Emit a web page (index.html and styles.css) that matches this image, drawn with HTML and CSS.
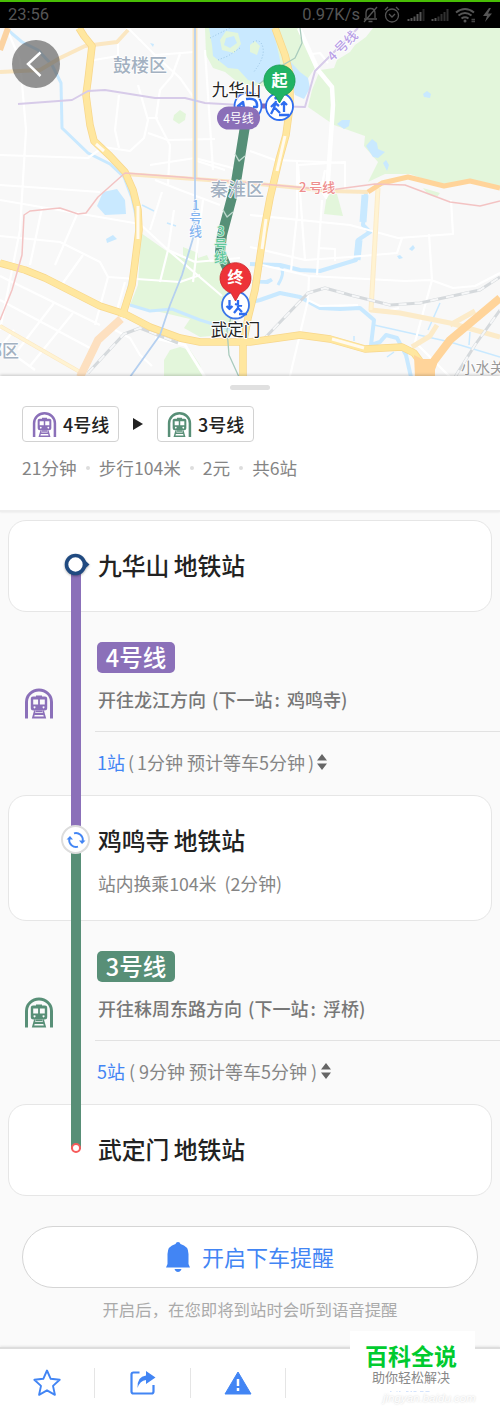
FILE: index.html
```
<!DOCTYPE html>
<html lang="zh-CN">
<head>
    <meta charset="UTF-8">
    <meta name="viewport" content="width=device-width, initial-scale=1.0">
    <title>九华山 - 武定门</title>
    <link rel="stylesheet" href="styles.css">
</head>
<body>
    <svg class="defs" width="0" height="0">
        <symbol id="train" viewBox="0 0 28 30">
            <path d="M1.5 30V13.5a12.5 12 0 0 1 25 0V30" fill="none" stroke="currentColor" stroke-width="3"/>
            <path fill="currentColor" fill-rule="evenodd" d="M11 7h6v1h3q2.200 0 2.200 2v9.500q0 2.500-2.700 2.500h-11q-2.700 0-2.700-2.500V10q0-2 2.200-2h3zM8.200 11v5h4.900v-5zM14.900 11v5h4.900v-5zM9.500 17.800a1 1 0 1 0 .1 0zM18.500 17.800a1 1 0 1 0 .1 0z"/>
            <path d="M10 22L8 29h12L18 22M9 25.500h10M11 22.800h6" fill="none" stroke="currentColor" stroke-width="1.800"/>
        </symbol>
    </svg>

    <div class="status">
        <span class="time">23:56</span>
        <span class="speed">0.97K/s</span>
        <svg class="status-icons" width="138" height="20" viewBox="0 0 138 20" fill="none" stroke="#555" stroke-width="1.300">
            <path d="M2 14h13M4 13V8q0-4.500 4.500-4.500T13 8v5M6.500 16.500h4M2 17L15 2"/>
            <circle cx="30" cy="10.500" r="6.500"/>
            <path d="M27 9l3 3 3-3M23 5l3-3M37 5l-3-3"/>
            <g stroke-width="2"><path d="M46.500 16v-2M49.500 16v-3M52.500 16V11.500M55.500 16V9M58.500 16V7"/><path stroke="#242424" d="M61.500 16V4"/></g>
            <g stroke-width="2"><path d="M70.500 16v-2M73.500 16v-3"/><path stroke="#303030" d="M76.500 16V11.500M79.500 16V9M82.500 16V7M85.500 16V4"/></g>
            <g stroke-width="2"><path d="M94 7.500q9-7 18 0M96.500 10.500q6.500-5 13 0M99.500 13.500q3.500-2.500 7 0"/></g>
            <circle cx="103" cy="16" r="1.500" fill="#555" stroke="none"/>
            <path d="M109.500 14.500h3.500M109.500 16.500h3.500" stroke="#444"/>
            <path d="M127 3l-6 8h4l-2 6 7-8.500h-4l3-5.500z" fill="#555" stroke="none"/>
        </svg>
    </div>

    <div class="map">
        <svg width="500" height="349" viewBox="0 28 500 349" fill="none" stroke-linejoin="round">
            <rect y="28" width="500" height="349" fill="#f8f8f8"/>

            <!-- parks -->
            <g fill="#e3f6db">
                <path d="M373 28L366 37 355 45 350 52 337 60 334 68 320 70 312 90 308 107 334 125 365 136 364 146 378 162 368 182 385 174 410 174 440 185 470 181 500 187V28z"/>
                <path d="M205 28L206 55 213 68 225 72 240 84 300 90 315 68 305 45 298 28z"/>
                <path d="M141 233L165 250 183 258V247L198 253V258L207 255 210 262 222 262 235 280 232 334 200 337 184 328 190 319 130 305 138 285z"/>
                <path d="M170 350L180 347 190 350 200 365 203 377H164V360z"/>
                <path d="M327 194h10l6 22-19-2zM423 188l17 5-3 4-10-4z"/>
                <path d="M174 115l6-5 6 4-1 6-6 4-6-4z"/>
            </g>

            <!-- water -->
            <g fill="#c9e9ff">
                <path d="M209 28L212 45 213 56 228 68 238 69 248 80 258 83 280 78 280 60 273 28z"/>
                <path d="M289 60L300 72 308 78 310 88 304 99 295 95 290 80z"/>
                <path d="M337 124l5-4 8 0-1 6-5 3zM366 146l6-7 5 4 1 6 7 3-7 6-5-1zM383 163l3-3 3 5-2 6zM423 94l4-3 4 3-1 4-6-1z"/>
                <path d="M97 206L103 192 117 189 125 200 126 214 105 215zM106 239l7-4 4 4-10 4zM150 43l4 1-1 3zM409 249l4-4 2 3-3 3zM397 256l3-1 3 3-4 1zM252 280h14l5-2 2 3-5 3-16-1z"/>
            </g>
            <path fill="#e3f6db" d="M220 40l6-9 12 2 3 11-7 9-12-3zM250 45l5-4 5 5-3 9-7-3z"/>
            <path fill="#c9e9ff" d="M226 38l8-2 3 7-7 5-6-3z"/>
            <path stroke="#9cc6e6" stroke-dasharray="1 2" d="M210 38l20-10M218 60l10-4 12-8M253 42q8-4 10 6t-10 25"/>
            <g stroke="#c9e9ff" stroke-width="4">
                <path stroke-width="3" d="M9 31L22 42 38 50 52 65 61 83 62 128 88 153 110 164 124 177 132 198 137 220 136 255 126 300"/>
                <path stroke-width="3" d="M130 305L150 311 172 309 200 320 232 330"/>
                <path d="M250 264L280 265 300 270 320 271 356 260 358 240 370 232 363 225 366 192"/>
                <path d="M365 195l-2 27M359 240l-2 20" stroke-width="7"/>
                <path d="M280 265q6 7-2 20" stroke-width="3"/>
                <path d="M244 304L260 300 280 293 300 297 320 308 340 309 360 308 374 320 371 345 380 342 386 335 397 338 406 355 411 377"/>
                <path d="M374 325L450 342 500 357M440 303l-12 27M354 336v5M387 357l7-5M470 332l-1 13M142 205l12 6M167 223l9 3" stroke-width="1.500"/>
            </g>

            <!-- minor streets -->
            <g stroke="#fff" stroke-width="2.200">
                <path d="M0 155L88 158 103 147 130 151 144 138 148 120 138 85M7 29L20 60 26 130 20 230 0 330M0 185L100 192"/>
                <path d="M94 60L118 56V40L128 28 155 55 194 52M119 95L115 130 119 148M155 55L180 78 194 98M180 54l-8 22-12 14-4 28 14 27-2 40"/>
                <path d="M148 133L168 140 215 139M148 118h10M205 50l8 120M194 160L225 170M150 165l45-7 45 12"/>
                <path d="M0 200L140 224 168 250 222 296M0 236L60 242 100 262 108 277 180 282 200 275M0 276L100 325M0 300L90 348"/>
                <path d="M42 208L30 265M78 212L55 265M83 255l-20 28M108 277L95 325M125 282l-8 28M0 345l35 25M54 303L18 350M73 313L30 366M14 330l-14 18"/>
                <path d="M174 210l-6 40-8 32M203 200l-10 82M162 192L150 230M155 180l25 10 40 15M168 250L195 262 240 258"/>
                <path d="M250 215L350 225 398 238 453 234 451 200M250 247L305 260 350 257 397 253 402 238M305 260L298 165 345 162V190"/>
                <path d="M250 151L275 160 345 163M297 160v55l-6 56M322 200l-5 75M318 248l17 1v12M262 265L309 276 405 281 431 280 453 288 475 286 500 273M309 276L308 300 290 376M308 300L320 306 358 305"/>
                <path d="M429 234L432 280 415 342 450 377M115 330L130 338 140 355 152 366"/>
                <path d="M155 338L185 345 205 377" stroke-width="3"/>
                <path d="M299 28L318 70 332 87 333 105 327 195" stroke-width="4.500"/>
                <path d="M312 54l8-1 8 10M325 170l-4 20 5 8 4-8-3-20M390 310l9-2"/>
            </g>

            <!-- secondary roads -->
            <g stroke="#fbe7c2" stroke-width="4">
                <path d="M0 72L40 70 60 58 85 46 117 42 128 30"/>
                <path d="M0 326L80 372"/>
                <path d="M125 174L250 183 330 191 368 192"/>
                <path d="M195 28V180" stroke-width="5"/>
                <path d="M0 50L8 28" stroke-width="6" stroke="#fbd3a2"/>
            </g>
            <g stroke="#fcebc9" stroke-width="5">
                <path d="M378 188L371 310 400 313 450 323 500 337M437 325L430 336 412 347M450 325l25-14"/>
            </g>
            <path stroke="#fff3d2" stroke-width="3" d="M0 326L80 372M378 188L371 310"/>

            <!-- railway -->
            <g stroke="#d5d9dc" stroke-width="3">
                <path d="M88 373L124 334 140 328 178 343M262 341L308 293 325 288 350 295 390 305 420 303 480 290 500 277M455 377L475 345 500 310"/>
                <path stroke="#f6f7f8" stroke-width="2" stroke-dasharray="8 8" d="M88 373L124 334 140 328 178 343M262 341L308 293 325 288 350 295 390 305 420 303 480 290 500 277M455 377L475 345 500 310"/>
            </g>

            <!-- main roads -->
            <g stroke="#f8d78c" stroke-width="7.500">
                <path d="M79 28L84 36 92 46 88 80 86 95 90 125 94 141 110 156 125 172 133 190 138 210 139 230 135 262 132 285 122 317"/>
                <path d="M275 28L285 55 290 75 290 105 286 135 279 160 270 198 264 230 255 290 248 318 243 345V377"/>
                <path d="M0 263L25 270 45 278 100 306 125 314 150 327 180 338 200 342 250 342 300 335 330 339 365 349 402 347 414 353 422 364 426 377"/>
            </g>
            <g stroke="#ffe79f" stroke-width="6">
                <path d="M79 28L84 36 92 46 88 80 86 95 90 125 94 141 110 156 125 172 133 190 138 210 139 230 135 262 132 285 122 317"/>
                <path d="M275 28L285 55 290 75 290 105 286 135 279 160 270 198 264 230 255 290 248 318 243 345V377"/>
                <path d="M0 263L25 270 45 278 100 306 125 314 150 327 180 338 200 342 250 342 300 335 330 339 365 349 402 347 414 353 422 364 426 377"/>
            </g>
            <path stroke="#fffaf0" stroke-width="3" d="M138 206v33M266 219l-4 30M96 144l8 7M332 339l32 9M285 136l-8 35"/>
            <path stroke="#fde0c0" stroke-width="8" d="M121 319L98 340 80 377"/>
            <path stroke="#ffd49a" stroke-width="8" d="M500 298L450 340 434 361 428 377"/>
            <path fill="#ffd49a" d="M414 355l8 4h10l6-4-3 10v12h-20z"/>
            <path stroke="#ffd49a" stroke-width="5" d="M368 192L382 183 408 177 444 186 470 181 500 188"/>

            <!-- metro lines -->
            <path stroke="#d7cbe9" stroke-width="2" d="M18 104L72 100 88 91 105 90 155 98 185 98 205 103 240 105 305 107 315 71 358 28"/>
            <path stroke="#f3c3c3" stroke-width="1.500" d="M0 320L12 290 22 255 24 215 30 211 60 208 78 214 86 213 98 197 125 173 180 177 250 183 330 190 375 184 405 185 450 202 480 206 500 201"/>
            <path stroke="#b5d0f0" stroke-width="1.800" d="M195 28V200L194 235 182 275 170 305 160 335 130 377"/>
            <path stroke="#a9cbbd" stroke-width="1.300" d="M300 28l2 15-7 15-12 7-25 20M232 315l-5 15 2 25 10 22"/>

            <!-- route -->
            <path stroke="#568f77" stroke-width="10" d="M246 120L236 182 222 235 220 252 228 270"/>
            <path stroke="#bcd7cc" stroke-width="1.500" d="M235 154l4 7 6-5M223 210l4 7 6-5"/>

            <g class="area">
                <text x="113" y="72">鼓楼区</text>
                <text x="210" y="196">秦淮区</text>
                <text x="-15" y="357" class="sm">邺区</text>
                <text x="461" y="373" class="tiny">小水关</text>
            </g>
            <g class="metro">
                <text x="299" y="192" fill="#ee8e8e">2 号线</text>
                <text transform="translate(333 62) rotate(-45)" fill="#b99fe6">4 号线</text>
                <text fill="#86b5ef"><tspan x="192" y="210">1</tspan><tspan x="189" y="223">号</tspan><tspan x="189" y="236">线</tspan></text>
                <text class="line3" fill="#5fc79a"><tspan x="217" y="236">3</tspan><tspan x="214" y="249">号</tspan><tspan x="214" y="262">线</tspan></text>
            </g>

            <!-- start -->
            <path stroke="#8768b3" stroke-width="5" d="M248 106h32"/>
            <circle cx="248" cy="106" r="13.500" fill="#fff" stroke="#2e6df0" stroke-width="1.800"/>
            <path stroke="#2e6df0" stroke-width="2.500" d="M246 99q12-2 11 8h-4M238 106l5-4 1 6z"/>
            <circle cx="279.500" cy="106.500" r="13.500" fill="#fff" stroke="#2e6df0" stroke-width="1.800"/>
            <path stroke="#2e6df0" stroke-width="2.300" d="M276 101l-2 7-3 6M275 108l5 5M271 107l4-4 4 3M279 115h10M284 112v-9M281 105l3-3 3 3"/>
            <circle cx="276" cy="98" r="1.800" fill="#2e6df0"/>
            <path fill="#20b364" stroke="#16994f" stroke-width=".8" d="M279.500 103l-4.500-7.500A15.600 15.600 0 1 1 284 95.500z"/>
            <text class="pin" x="279.500" y="85.500">起</text>
            <rect x="217" y="106.500" width="43" height="23" rx="11.500" fill="#8b6fb8"/>
            <text class="tag" x="238.500" y="122.500">4号线</text>
            <text class="stop" x="236.500" y="95.500">九华山</text>

            <!-- end -->
            <circle cx="235.500" cy="305" r="13.500" fill="#fff" stroke="#3b76e8" stroke-width="1.800"/>
            <path stroke="#2e6df0" stroke-width="2.300" d="M229.500 300v8M226.500 306l3 3 3-3M238 300v8l4 4M238 308l-4 5M235 304l7 2M239 314h8"/>
            <path fill="#ed3338" stroke="#ca2429" stroke-width=".8" d="M235.500 301l-4.500-8A15.500 15.500 0 1 1 240 293z"/>
            <text class="pin" x="235.500" y="283">终</text>
            <text class="stop" x="235.500" y="336">武定门</text>
        </svg>
        <div class="back">
            <svg width="48" height="48" viewBox="0 0 48 48"><path d="M28.500 12.500L16 24 28.500 36" fill="none" stroke="#fff" stroke-width="2.500"/></svg>
        </div>
    </div>

    <div class="summary">
        <div class="handle"></div>
        <div class="chips">
            <div class="chip"><svg class="purple" width="25" height="25"><use href="#train"/></svg>4号线</div>
            <div class="arrow"></div>
            <div class="chip"><svg class="green" width="25" height="25"><use href="#train"/></svg>3号线</div>
        </div>
        <div class="meta">
            <span>21分钟</span><i></i><span>步行104米</span><i></i><span>2元</span><i></i><span>共6站</span>
        </div>
    </div>

    <div class="route">
        <div class="card">
            <h2>九华山 地铁站</h2>
            <svg class="node node-start" width="30" height="26" viewBox="0 0 30 26"><path d="M20 5.500l7.500 7-7.500 7z" fill="#204a80"/><circle cx="13.500" cy="12.500" r="9" fill="#fff" stroke="#204a80" stroke-width="3.600"/></svg>
        </div>
        <div class="leg">
            <svg class="leg-icon purple" width="28" height="31"><use href="#train"/></svg>
            <div class="leg-body">
                <div class="badge bg-purple">4号线</div>
                <div class="direction">开往龙江方向 (下一站<em>:</em> 鸡鸣寺)</div>
                <div class="stops"><b>1站</b><span>(</span>1分钟 预计等车5分钟<span>)</span><svg width="10" height="16" viewBox="0 0 10 16"><path d="M5 0l5 6.500H0zM5 16l5-6.500H0z" fill="#666"/></svg></div>
            </div>
            <div class="rail bg-purple rail-first"></div>
        </div>
        <div class="card card-change">
            <h2>鸡鸣寺 地铁站</h2>
            <p>站内换乘104米 (2分钟)</p>
            <div class="node node-change">
                <svg width="20" height="20" viewBox="0 0 20 20" fill="none" stroke="#4285f4" stroke-width="1.800"><path d="M8 3.300A7 7 0 0 1 16.800 11M12 16.700A7 7 0 0 1 3.200 9"/><path fill="#4285f4" stroke="none" d="M13 10.500h6.500L16 14zM.5 9.500H7L4 6z"/></svg>
            </div>
        </div>
        <div class="leg">
            <svg class="leg-icon green" width="28" height="31"><use href="#train"/></svg>
            <div class="leg-body">
                <div class="badge bg-green">3号线</div>
                <div class="direction">开往秣周东路方向 (下一站<em>:</em> 浮桥)</div>
                <div class="stops stops-wide"><b>5站</b><span>(</span>9分钟 预计等车5分钟<span>)</span><svg width="10" height="16" viewBox="0 0 10 16"><path d="M5 0l5 6.500H0zM5 16l5-6.500H0z" fill="#666"/></svg></div>
            </div>
            <div class="rail bg-green rail-last"></div>
        </div>
        <div class="card">
            <h2>武定门 地铁站</h2>
            <div class="node node-end"></div>
        </div>

        <button class="remind">
            <svg width="24" height="30" viewBox="0 0 24 30" fill="#4285f4"><path d="M12 0q2 0 2.500 2 8 2 8 10v10l1.500 3.500H0L1.500 22V12q0-8 8-10Q10 0 12 0zM8.500 27h7q-1 3-3.500 3t-3.500-3z"/></svg>
            <span>开启下车提醒</span>
        </button>
        <div class="hint">开启后，在您即将到站时会听到语音提醒</div>
    </div>

    <div class="footer">
        <div class="tool"><svg width="30" height="30" viewBox="0 0 30 30"><path d="M15 2.500l3.700 8.300 9 1-6.700 6.100 1.900 8.900L15 22.300 7.100 26.800 9 17.900 2.300 11.800l9-1z" fill="none" stroke="#4285f4" stroke-width="1.900" stroke-linejoin="round"/></svg></div>
        <div class="tool"><svg width="30" height="30" viewBox="0 0 30 30"><path d="M11.500 4.500h-6q-2 0-2 2v17q0 2 2 2h18q2 0 2-2V17" fill="none" stroke="#4285f4" stroke-width="2.200"/><path d="M18 3l9.500 6.500L18 16v-4q-6 .5-8.500 8Q9 8.500 18 7.500z" fill="#4285f4"/></svg></div>
        <div class="tool"><svg width="30" height="30" viewBox="0 0 30 30"><path d="M15 4l13 22H2z" fill="#4285f4" stroke="#4285f4" stroke-linejoin="round"/><path d="M15 11v7M15 20v3" stroke="#fff" stroke-width="2.500"/></svg></div>
        <div class="brand">
            <strong>百科全说</strong>
            <small>助你轻松解决</small>
            <svg width="84" height="2" viewBox="0 0 84 2"><path d="M0 .5h3M13 .5h2M18 .5h3M32 .5h5M41 .5h3M47 .5h6M60 .5h7M71 .5h8" stroke="#8cb4f6"/></svg>
        </div>
        <div class="site">jingyan.baidu.com</div>
    </div>
</body>
</html>
```

FILE: styles.css
```
* {
    box-sizing: border-box;
}

body {
    margin: 0;
    width: 500px;
    height: 1416px;
    overflow: hidden;
    background: #fafafa;
    color: #222;
    font-family: "Noto Sans CJK SC", sans-serif;
}

.defs {
    position: absolute;
}

.purple {
    color: #8b70b9;
}

.green {
    color: #588f77;
}

.bg-purple {
    background: #8b70b9;
}

.bg-green {
    background: #588f77;
}

/* status bar */
.status {
    display: flex;
    align-items: center;
    height: 28px;
    padding: 0 0 0 8px;
    background: #000;
    border-top: 2px solid #48bd05;
    color: #555;
    font: 16.5px/26px Roboto, sans-serif;
}

.speed {
    margin-left: auto;
    margin-right: 2px;
}

/* map */
.map {
    position: relative;
    height: 348px;
    overflow: hidden;
}

.map svg {
    display: block;
}

.back {
    position: absolute;
    left: 12px;
    top: 12px;
    width: 48px;
    height: 48px;
    border-radius: 50%;
    background: rgba(90, 90, 90, 0.65);
}

.area text {
    font-size: 18px;
    font-weight: 500;
    fill: #a3b1c1;
    stroke: #fff;
    stroke-width: 1.5px;
    paint-order: stroke;
}

.area .sm {
    font-size: 17px;
}

.area .tiny {
    font-size: 14.5px;
    font-weight: 400;
    fill: #999;
}

.metro text {
    font-size: 13px;
    font-weight: 500;
    stroke: #fff;
    stroke-width: 1.5px;
    paint-order: stroke;
}

.metro .line3 {
    stroke: #d4f0e4;
}

.pin,
.tag,
.stop {
    text-anchor: middle;
    fill: #fff;
}

.pin {
    font-size: 16px;
    font-weight: 700;
}

.tag {
    font-size: 12px;
}

.stop {
    font-size: 16.5px;
    fill: #222;
    stroke: #fff;
    stroke-width: 2px;
    paint-order: stroke;
}

/* trip summary */
.summary {
    position: relative;
    height: 136px;
    padding: 9px 22px 0;
    background: #fff;
    border-bottom: 2px solid #eee;
    box-shadow: 0 -1px 3px rgba(0, 0, 0, 0.2);
}

.handle {
    width: 40px;
    height: 5px;
    margin: 0 auto;
    border-radius: 3px;
    background: #e0e0e0;
}

.chips {
    display: flex;
    align-items: center;
    margin-top: 16px;
}

.chip {
    display: flex;
    align-items: center;
    gap: 6px;
    width: 97px;
    height: 36px;
    padding-left: 9px;
    border: 1px solid #d2d2d2;
    border-radius: 4px;
    font-size: 18px;
    font-weight: 500;
    line-height: 32px;
}

.arrow {
    margin: 0 14px;
    border-left: 10px solid #222;
    border-top: 6px solid transparent;
    border-bottom: 6px solid transparent;
}

.meta {
    display: flex;
    align-items: center;
    margin-top: 13px;
    color: #858585;
    font-size: 17.6px;
    line-height: 26px;
}

.meta i {
    width: 4px;
    height: 4px;
    margin: 0 9px;
    border-radius: 50%;
    background: #ddd;
}

/* route */
.route {
    padding-top: 8px;
}

.card {
    position: relative;
    height: 92px;
    margin: 0 8px;
    padding: 27px 0 0 89px;
    background: #fff;
    border: 1px solid #e6e6e6;
    border-radius: 18px;
}

.card-change {
    height: 126px;
}

.card h2 {
    margin: 0;
    font-size: 23.8px;
    line-height: 34px;
    font-weight: 500;
    word-spacing: -1px;
}

.card p {
    margin: 13px 0 0;
    color: #858585;
    font-size: 17.8px;
    line-height: 26px;
    word-spacing: 4px;
}

.leg {
    position: relative;
    display: flex;
    height: 183px;
    padding: 30px 0 0 25px;
}

.leg-icon {
    flex: none;
    margin-top: 46px;
}

.leg-body {
    flex: 1;
    margin-left: 42px;
}

.badge {
    width: 78px;
    height: 31px;
    margin-left: 2px;
    border-radius: 5px;
    color: #fff;
    font-size: 23.5px;
    font-weight: 500;
    line-height: 30px;
    text-align: center;
}

.direction {
    height: 59px;
    padding: 12px 0 0 3px;
    border-bottom: 1px solid #e2e2e2;
    color: #777;
    font-size: 18px;
    font-weight: 500;
    line-height: 28px;
    word-spacing: 2px;
}

.direction em {
    margin: 0 1px 0 2px;
    font-style: normal;
}

.stops {
    display: flex;
    align-items: center;
    padding: 16px 0 0 2px;
    color: #858585;
    font-size: 18px;
    line-height: 28px;
    white-space: pre;
}

.stops b {
    color: #4285f4;
    font-weight: 400;
}

.stops span {
    margin: 0 3px;
}

.stops-wide span {
    margin: 0 4px;
}

/* coloured track, runs over the cards above and below each leg */
.rail {
    position: absolute;
    z-index: 1;
    left: 71px;
    width: 10px;
}

.rail-first {
    top: -46px;
    bottom: -44px;
}

.rail-last {
    top: -82px;
    bottom: -45px;
}

.node {
    position: absolute;
    z-index: 2;
}

.node-start {
    left: 53px;
    top: 31px;
    filter: drop-shadow(0 1px 1px rgba(0, 0, 0, 0.3));
}

.node-change {
    display: flex;
    align-items: center;
    justify-content: center;
    left: 52px;
    top: 29px;
    width: 29px;
    height: 29px;
    border: 2px solid #ddd;
    border-radius: 50%;
    background: #fff;
}

.node-end {
    left: 62px;
    top: 38px;
    width: 10px;
    height: 10px;
    border: 2px solid #f65a5a;
    border-radius: 50%;
    background: #fff;
}

.remind {
    display: flex;
    align-items: center;
    justify-content: center;
    gap: 12px;
    width: 456px;
    height: 62px;
    margin: 30px auto 0;
    background: #fff;
    border: 1px solid #d5d5d5;
    border-radius: 31px;
    color: #4285f4;
    font: 22px "Noto Sans CJK SC", sans-serif;
}

.remind span {
    padding-bottom: 3px;
}

.hint {
    margin-top: 8px;
    color: #aaa;
    font-size: 16.4px;
    line-height: 26px;
    text-align: center;
}

/* bottom toolbar */
.footer {
    position: relative;
    display: flex;
    align-items: flex-start;
    height: 70px;
    margin-top: 25px;
    padding-top: 19px;
    background: #fff;
    border-top: 2px solid #ddd;
    box-shadow: 0 -1px 2px rgba(0, 0, 0, 0.08);
}

.tool {
    display: flex;
    align-items: center;
    justify-content: center;
    width: 95.4px;
    height: 30px;
    border-right: 1px solid #e5e5e5;
}

.brand {
    position: absolute;
    left: 350px;
    top: -18px;
    display: flex;
    flex-direction: column;
    align-items: center;
    width: 125px;
    height: 61px;
    padding: 8px 3px 0 0;
    background: #fff;
}

.brand strong {
    color: #00cb2f;
    font-size: 23px;
    font-weight: 700;
    line-height: 32px;
}

.brand small {
    color: #888;
    font-size: 13px;
    line-height: 12px;
}

.brand svg {
    margin-top: 8px;
}

.site {
    position: absolute;
    left: 383px;
    top: 41px;
    color: #fff;
    font: italic 11.5px/16px "Liberation Sans", sans-serif;
    text-shadow: 0 0 2px #ccc;
}
```
